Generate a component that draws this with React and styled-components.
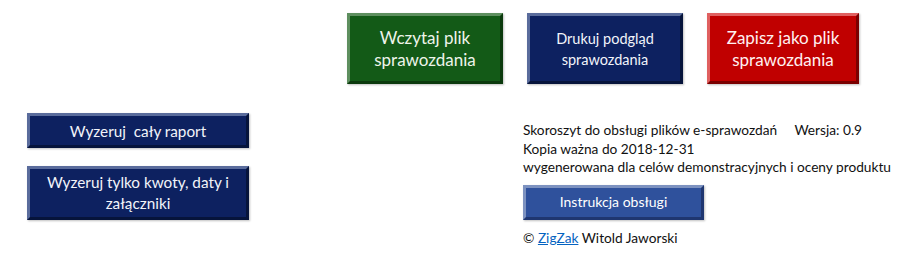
import styled, { createGlobalStyle } from 'styled-components';

const GlobalStyle = createGlobalStyle`
	body {
		margin: 0;
		background: #fff;
		font-family: Lato, "Open Sans", sans-serif;
	}
`;

const Page = styled.div`
	width: 910px;
	height: 263px;
	padding-top: 13px;
	box-sizing: border-box;
`;

const TopRow = styled.div`
	display: flex;
	margin-left: 347px;
	gap: 24px;
`;

const colors = {
	green: { bg: '#135a17', light: '#5e8f5f', dark: '#0b3a0d', text: '#eef4ea' },
	navy: { bg: '#0d2160', light: '#5a6c9c', dark: '#06143b', text: '#f2f4fa' },
	red: { bg: '#c00000', light: '#e06060', dark: '#7a0000', text: '#fff0f0' },
	blue: { bg: '#2f519c', light: '#7d92c0', dark: '#1f3670', text: '#ffffff' },
};

const Button = styled.div`
	display: flex;
	align-items: center;
	justify-content: center;
	text-align: center;
	box-sizing: border-box;
	width: ${( p ) => p.$w}px;
	height: ${( p ) => p.$h}px;
	background: ${( p ) => colors[ p.$tone ].bg};
	color: ${( p ) => colors[ p.$tone ].text};
	border-top: 3px solid ${( p ) => colors[ p.$tone ].light};
	border-left: 3px solid ${( p ) => colors[ p.$tone ].light};
	border-right: 3px solid ${( p ) => colors[ p.$tone ].dark};
	border-bottom: 3px solid ${( p ) => colors[ p.$tone ].dark};
	font-size: ${( p ) => p.$fs}px;
	line-height: ${( p ) => p.$lh}px;
	box-shadow: 1px 1px 2px rgba(0, 0, 0, 0.25);
	white-space: pre-line;
`;

const Lower = styled.div`
	display: flex;
	margin-top: 29px;
`;

const LeftCol = styled.div`
	display: flex;
	flex-direction: column;
	gap: 18px;
	margin-left: 27px;
	width: 496px;
`;

const InfoCol = styled.div`
	display: flex;
	flex-direction: column;
	padding-top: 8px;
	font-size: 13.7px;
	color: #111;
`;

const InfoLine = styled.div`
	line-height: 18.5px;
	white-space: pre;
`;

const Spacer = styled.div`
	height: 8px;
`;

const Footer = styled.div`
	margin-top: 9px;
	line-height: 18px;
	font-size: 13.7px;
`;

const ZigLink = styled.a`
	color: #0563c1;
	text-decoration: underline;
`;

const App = () => (
	<>
		<GlobalStyle />
		<Page>
			<TopRow>
				<Button $tone="green" $w={ 156 } $h={ 71 } $fs={ 17 } $lh={ 22 }>
					{ 'Wczytaj plik\nsprawozdania' }
				</Button>
				<Button $tone="navy" $w={ 156 } $h={ 71 } $fs={ 14.5 } $lh={ 21 }>
					{ 'Drukuj podgląd\nsprawozdania' }
				</Button>
				<Button $tone="red" $w={ 152 } $h={ 71 } $fs={ 17 } $lh={ 22 }>
					{ 'Zapisz jako plik\nsprawozdania' }
				</Button>
			</TopRow>
			<Lower>
				<LeftCol>
					<Button $tone="navy" $w={ 222 } $h={ 35 } $fs={ 15.3 } $lh={ 18 }>
						Wyzeruj&nbsp; cały raport
					</Button>
					<Button $tone="navy" $w={ 222 } $h={ 54 } $fs={ 15.3 } $lh={ 21 }>
						{ 'Wyzeruj tylko kwoty, daty i\nzałączniki' }
					</Button>
				</LeftCol>
				<InfoCol>
					<InfoLine>{ 'Skoroszyt do obsługi plików e-sprawozdań     Wersja: 0.9' }</InfoLine>
					<InfoLine>Kopia ważna do 2018-12-31</InfoLine>
					<InfoLine>wygenerowana dla celów demonstracyjnych i oceny produktu</InfoLine>
					<Spacer />
					<Button $tone="blue" $w={ 181 } $h={ 35 } $fs={ 14 } $lh={ 18 }>
						Instrukcja obsługi
					</Button>
					<Footer>
						© <ZigLink href="#">ZigZak</ZigLink> Witold Jaworski
					</Footer>
				</InfoCol>
			</Lower>
		</Page>
	</>
);

export default App;
